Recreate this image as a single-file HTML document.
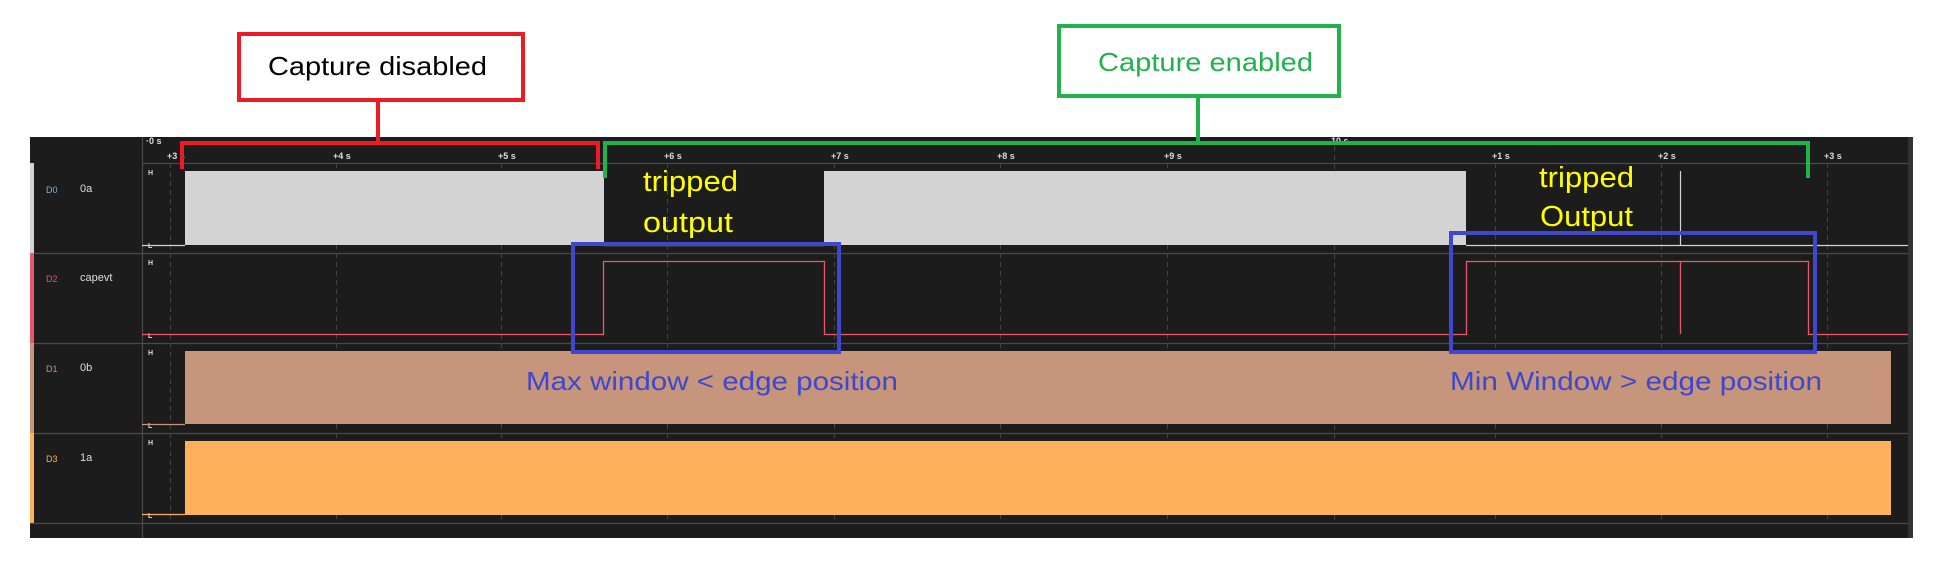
<!DOCTYPE html>
<html><head><meta charset="utf-8"><style>
html,body{margin:0;padding:0;background:#fff;width:1946px;height:576px;overflow:hidden}
svg{display:block}
text{font-family:"Liberation Sans",sans-serif}
</style></head><body>
<svg width="1946" height="576" viewBox="0 0 1946 576" xmlns="http://www.w3.org/2000/svg">
<rect x="0" y="0" width="1946" height="576" fill="#fff"/>
<rect x="30" y="137" width="1883" height="401" fill="#1c1c1c"/>
<rect x="1908" y="137" width="5" height="401" fill="#333"/>
<rect x="30" y="163" width="4" height="90" fill="#d3d3d3"/>
<rect x="30" y="253" width="4" height="90" fill="#e8576a"/>
<rect x="30" y="343" width="4" height="90" fill="#c6957b"/>
<rect x="30" y="433" width="4" height="90" fill="#ffb05a"/>
<g stroke="#4a4a4a" stroke-width="1.2">
<line x1="142.5" y1="137" x2="142.5" y2="538"/>
<line x1="142" y1="163.5" x2="1908" y2="163.5"/>
<line x1="34" y1="253.5" x2="1908" y2="253.5"/>
<line x1="34" y1="343.5" x2="1908" y2="343.5"/>
<line x1="34" y1="433.5" x2="1908" y2="433.5"/>
<line x1="30" y1="523.5" x2="1908" y2="523.5"/>
</g>
<g stroke="#444" stroke-width="1" stroke-dasharray="5,4">
<line x1="170.5" y1="163" x2="170.5" y2="523"/>
<line x1="336.5" y1="163" x2="336.5" y2="523"/>
<line x1="501.5" y1="163" x2="501.5" y2="523"/>
<line x1="667.5" y1="163" x2="667.5" y2="523"/>
<line x1="834.5" y1="163" x2="834.5" y2="523"/>
<line x1="1000.5" y1="163" x2="1000.5" y2="523"/>
<line x1="1167.5" y1="163" x2="1167.5" y2="523"/>
<line x1="1334.5" y1="137" x2="1334.5" y2="523"/>
<line x1="1495.5" y1="163" x2="1495.5" y2="523"/>
<line x1="1661.5" y1="163" x2="1661.5" y2="523"/>
<line x1="1827.5" y1="163" x2="1827.5" y2="523"/>
</g>
<g fill="#ddd" font-size="9" font-weight="bold">
<text x="146" y="144">·0 s</text>
<text x="167" y="159">+3 s</text>
<text x="333" y="159">+4 s</text>
<text x="498" y="159">+5 s</text>
<text x="664" y="159">+6 s</text>
<text x="831" y="159">+7 s</text>
<text x="997" y="159">+8 s</text>
<text x="1164" y="159">+9 s</text>
<text x="1331" y="144">10 s</text>
<text x="1492" y="159">+1 s</text>
<text x="1658" y="159">+2 s</text>
<text x="1824" y="159">+3 s</text>
</g>
<g font-size="11">
<text x="46" y="193" fill="#7fb6d8" font-size="9">D0</text><text x="80" y="192" fill="#ddd">0a</text>
<text x="46" y="282" fill="#e8576a" font-size="9">D2</text><text x="80" y="281" fill="#ddd">capevt</text>
<text x="46" y="372" fill="#c6957b" font-size="9">D1</text><text x="80" y="371" fill="#ddd">0b</text>
<text x="46" y="462" fill="#ffb05a" font-size="9">D3</text><text x="80" y="461" fill="#ddd">1a</text>
</g>
<g fill="#ddd" font-size="7" font-weight="bold">
<text x="148" y="175">H</text><text x="148" y="248">L</text>
<text x="148" y="265">H</text><text x="148" y="338">L</text>
<text x="148" y="355">H</text><text x="148" y="428">L</text>
<text x="148" y="445">H</text><text x="148" y="518">L</text>
</g>
<rect x="185" y="171" width="419" height="74" fill="#d3d3d3"/>
<rect x="824" y="171" width="642" height="74" fill="#d3d3d3"/>
<path d="M142 245.5H185M604 245.5H824M1466 245.5H1908M1680.5 171V245" stroke="#d3d3d3" stroke-width="1.2" fill="none"/>
<path d="M142 334.5H603.5V261.5H824.5V334.5H1466.5V261.5H1808.5V334.5H1908M1680.5 261V334" stroke="#e8576a" stroke-width="1.3" fill="none"/>
<rect x="185" y="351" width="1706" height="73" fill="#c6957b"/>
<path d="M142 424.5H185" stroke="#c6957b" stroke-width="1.2"/>
<rect x="185" y="441" width="1706" height="74" fill="#ffb05a"/>
<path d="M142 514.5H185" stroke="#ffb05a" stroke-width="1.2"/>
<rect x="239" y="34" width="284" height="66" fill="#fff" stroke="#ed1c24" stroke-width="4"/>
<text x="268" y="75" font-size="26" fill="#000" textLength="219" lengthAdjust="spacingAndGlyphs">Capture disabled</text>
<path d="M378 100V143M182 169V143H598V169" stroke="#ed1c24" stroke-width="4" fill="none"/>
<rect x="1059" y="26" width="280" height="70" fill="#fff" stroke="#22b14c" stroke-width="4"/>
<text x="1098" y="71" font-size="26" fill="#22b14c" textLength="215" lengthAdjust="spacingAndGlyphs">Capture enabled</text>
<path d="M1198 96V143M605 178V143H1808V178" stroke="#22b14c" stroke-width="4" fill="none"/>
<g fill="#ffff00" font-size="29">
<text x="643" y="191" textLength="95" lengthAdjust="spacingAndGlyphs">tripped</text>
<text x="643" y="232" textLength="90" lengthAdjust="spacingAndGlyphs">output</text>
<text x="1539" y="187" textLength="95" lengthAdjust="spacingAndGlyphs">tripped</text>
<text x="1540" y="226" textLength="93" lengthAdjust="spacingAndGlyphs">Output</text>
</g>
<rect x="573" y="244" width="266" height="108" fill="none" stroke="#3f48cc" stroke-width="4"/>
<rect x="1451" y="233" width="364" height="119" fill="none" stroke="#3f48cc" stroke-width="4"/>
<g fill="#3f48cc" font-size="26">
<text x="526" y="390" textLength="372" lengthAdjust="spacingAndGlyphs">Max window &lt; edge position</text>
<text x="1450" y="390" textLength="372" lengthAdjust="spacingAndGlyphs">Min Window &gt; edge position</text>
</g>
</svg>
</body></html>
